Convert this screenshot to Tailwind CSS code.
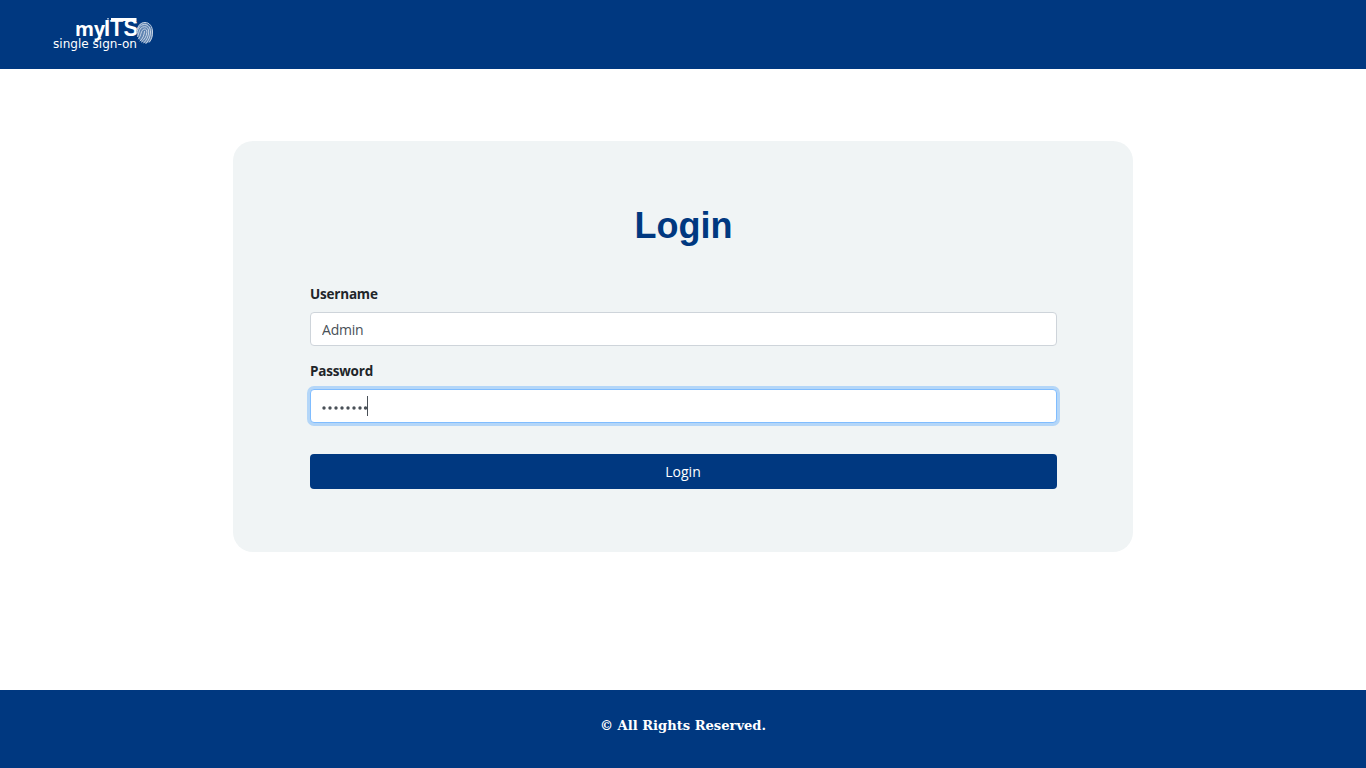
<!DOCTYPE html>
<html lang="en">
<head>
  <meta charset="UTF-8">
  <meta name="viewport" content="width=device-width, initial-scale=1.0">
  <title>myITS Single Sign-On - Login</title>
  <script src="https://cdn.jsdelivr.net/npm/@tailwindcss/browser@4"></script>
</head>
<body class="flex flex-col h-screen overflow-hidden bg-white font-['Open_Sans',sans-serif] text-sm text-[#212529]">

<!-- Navbar -->
<nav class="h-[69px] shrink-0 bg-[#003880] pl-[50px] pt-[14px]">
  <svg class="block overflow-visible" width="106" height="42" viewBox="50 14 106 42" fill="#fff">
    <text x="75" y="35.5" font-family="Open Sans, sans-serif" font-size="20" font-weight="700" textLength="30" lengthAdjust="spacingAndGlyphs">my</text>
    <text x="104" y="35.5" font-family="Liberation Sans, sans-serif" font-size="24" font-weight="700" textLength="34" lengthAdjust="spacingAndGlyphs">ITS</text>
    <rect x="111" y="18" width="25.500" height="3"/>
    <rect x="105" y="18" width="6" height="2" fill="#003880"/>
    <rect x="107" y="18" width="2" height="1.500" fill="#8fabcb"/>
    <text x="53" y="48" font-family="DejaVu Sans, sans-serif" font-size="11.5" textLength="84" lengthAdjust="spacingAndGlyphs">single sign-on</text>
    <!-- Fingerprint -->
    <ellipse cx="144.700" cy="32.800" rx="8" ry="10.500" fill="#5f83b1" transform="rotate(-14 144.700 32.800)"/>
    <g fill="none" stroke="#c9d6e6" stroke-width="1" stroke-linecap="round">
      <path d="M137.500 29c1-4 4-6.500 7.500-6.500 4.500 0 7.500 4 7.500 9.500 0 4-1 7-3 10"/>
      <path d="M137 33c.5-5 3.500-8.500 7.500-8.500 4 0 6 3.500 6 7.500 0 4-1.500 8-4.500 11.500"/>
      <path d="M137.500 36.500c2-3 1-9.500 7-9.800 3 0 4.300 2.500 4.200 5.300-.2 4.500-2 8-5 11"/>
      <path d="M138.500 39c3-3 2-9.500 6-10 2 0 2.500 1.500 2.300 3.500-.3 4-2.300 7-5.300 9.500"/>
      <path d="M140 41c3-2.500 4-5.500 4.500-9.500"/>
    </g>
  </svg>
</nav>

<!-- Login card -->
<main class="flex-1 pt-[72px]">
  <div class="mx-auto w-[900px] h-[411px] rounded-[20px] bg-[#f0f4f5] pl-[77px] pr-[76px] pt-[63px]">
    <h1 class="text-center font-['Liberation_Sans',sans-serif] text-[36px] leading-[44px] font-bold text-[#003880]">Login</h1>
    <form>
      <label for="username" class="mt-[36px] block text-[13.5px] leading-[21px] font-bold tracking-[-0.2px]">Username</label>
      <input id="username" type="text" value="Admin" class="mt-[7px] block h-[34px] w-full rounded-[4px] border border-[#ced4da] bg-white px-[11px] pt-px tracking-[-0.2px] text-[#495057]">
      <label class="mt-[15px] block text-[13.5px] leading-[21px] font-bold tracking-[-0.2px]">Password</label>
      <div class="mt-[7px] flex h-[34px] w-full items-center rounded-[4px] border border-[#80bdff] bg-white px-[11px] ring-3 ring-[#007bff]/25">
        <svg class="mt-[3px]" width="45" height="6" viewBox="0 0 45 6" fill="#495057">
          <circle cx="2" cy="3" r="1.700"/><circle cx="8" cy="3" r="1.700"/><circle cx="14" cy="3" r="1.700"/><circle cx="20" cy="3" r="1.700"/>
          <circle cx="26" cy="3" r="1.700"/><circle cx="32" cy="3" r="1.700"/><circle cx="38" cy="3" r="1.700"/><circle cx="43.500" cy="3" r="1.700"/>
        </svg>
        <span class="h-5 w-px bg-[#495057]"></span>
      </div>
      <button type="button" class="mt-[31px] block h-[35px] w-full rounded-[4px] bg-[#003880] pr-px text-white">Login</button>
    </form>
  </div>
</main>

<!-- Footer -->
<footer class="h-[78px] shrink-0 bg-[#003880] pt-[25px]">
  <svg class="mx-auto block" width="166" height="20" viewBox="0 0 166 20" fill="#fff">
    <text x="0" y="15" font-family="DejaVu Serif, serif" font-size="13.5" font-weight="700" textLength="166" lengthAdjust="spacingAndGlyphs">&copy; All Rights Reserved.</text>
  </svg>
</footer>

</body>
</html>
